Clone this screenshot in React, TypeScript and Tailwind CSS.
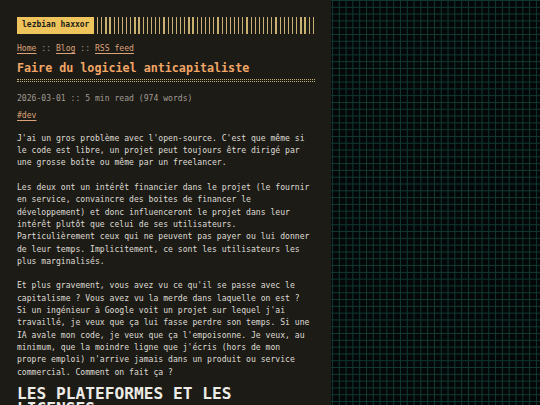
const paragraphs = [
  "J'ai un gros problème avec l'open-source. C'est que même si le code est libre, un projet peut toujours être dirigé par une grosse boîte ou même par un freelancer.",
  "Les deux ont un intérêt financier dans le projet (le fournir en service, convaincre des boites de financer le développement) et donc influenceront le projet dans leur intérêt plutôt que celui de ses utilisateurs. Particulièrement ceux qui ne peuvent pas payer ou lui donner de leur temps. Implicitement, ce sont les utilisateurs les plus marginalisés.",
  "Et plus gravement, vous avez vu ce qu'il se passe avec le capitalisme ? Vous avez vu la merde dans laquelle on est ? Si un ingénieur à Google voit un projet sur lequel j'ai travaillé, je veux que ça lui fasse perdre son temps. Si une IA avale mon code, je veux que ça l'empoisonne. Je veux, au minimum, que la moindre ligne que j'écris (hors de mon propre emploi) n'arrive jamais dans un produit ou service commercial. Comment on fait ça ?",
];

const navLinks = ["Home", "Blog", "RSS feed"];

const App = () => {
  return (
    <div className="flex h-[405px] w-[540px] overflow-hidden font-['DejaVu_Sans_Mono',monospace]">
      <div className="w-[331px] shrink-0 bg-[#1d1b16] pl-[17px] pt-[17px]">
        <div className="w-[298px]">
          <header className="flex h-[16.5px] items-stretch gap-[3px]">
            <span className="flex items-center bg-[#f0c45c] px-[5px] text-[8px] font-bold text-[#1d1b16]">
              lezbian haxxor
            </span>
            <span className="flex-1 bg-[repeating-linear-gradient(to_right,#c9b070_0_1.2px,transparent_1.2px_4.15px)]" />
          </header>

          <nav className="mt-[8px] text-[8.1px] leading-[12.3px] text-[#9a968c]">
            {navLinks.map((link, i) => (
              <span key={link}>
                {i > 0 && " :: "}
                <a className="text-[#dca37a] underline underline-offset-[1.5px]">
                  {link}
                </a>
              </span>
            ))}
          </nav>

          <h1 className="mt-[6.5px] text-[11.7px] font-bold leading-[16px] text-[#f2a766]">
            Faire du logiciel anticapitaliste
          </h1>
          <div className="mt-[2.5px] flex flex-col gap-[1px]">
            <div className="border-t border-dotted border-[#c4ad76]" />
            <div className="border-t border-dotted border-[#c4ad76]" />
          </div>

          <div className="mt-[10.5px] text-[8.1px] leading-[12.3px] text-[#a09c94]">
            2026-03-01 :: 5 min read (974 words)
          </div>
          <div className="mt-[4px] text-[8.1px] leading-[12.3px]">
            <a className="text-[#dca37a] underline underline-offset-[1.5px]">
              #dev
            </a>
          </div>

          <div className="mt-[11px] flex w-[294px] flex-col gap-[12.3px] text-[8.1px] leading-[12.3px] text-[#dedbd4]">
            {paragraphs.map((p, i) => (
              <p key={`para_${i}`}>{p}</p>
            ))}
          </div>

          <h2 className="mt-[9.4px] text-[16.2px] font-bold leading-[14.5px] text-[#ecebe6]">
            LES PLATEFORMES ET LES LICENSES
          </h2>
        </div>
      </div>
      <div className="flex-1 bg-[#040707] bg-[linear-gradient(to_right,#0f3a32_1px,transparent_1px),linear-gradient(to_bottom,#0f3a32_1px,transparent_1px)] bg-[size:6.8px_6.8px] bg-[position:1px_0px]" />
    </div>
  );
};

export default App;
